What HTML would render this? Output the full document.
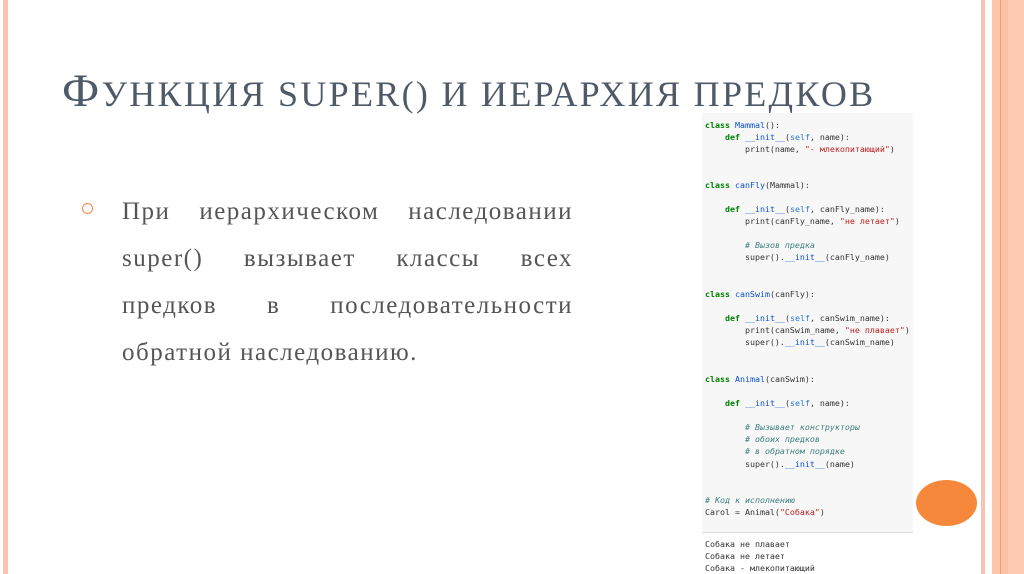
<!DOCTYPE html>
<html><head><meta charset="utf-8"><style>
body{margin:0;width:1024px;height:574px;background:#fff;position:relative;overflow:hidden;font-family:"Liberation Serif",serif}
.s{position:absolute;top:0;height:574px}
#title{position:absolute;left:62px;top:64px;color:#4f5a68;white-space:nowrap;font-size:36px;letter-spacing:2.3px}
#title .b{font-size:47px}
#body{position:absolute;left:122px;top:188px;width:451px;font-size:25px;line-height:47px;color:#555;letter-spacing:1.5px}
#body div{text-align:justify;text-align-last:justify;white-space:nowrap}
#body div.last{text-align-last:left}
#bul{position:absolute;left:82px;top:203px;width:9px;height:9px;border:1.6px solid #f08a4b;border-radius:50%}
#code{position:absolute;left:702px;top:113px;width:211px;height:419px;background:#f7f7f7;border-bottom:1px solid #ddd}
.l{position:absolute;font-family:"DejaVu Sans Mono","Liberation Mono",monospace;font-size:8.3px;white-space:pre;color:#333;left:705px}
.k{color:#008000;font-weight:bold}.c{color:#0a50c8}.st{color:#ba2121}.cm{color:#408080;font-style:italic}.sf{color:#2a7acb}
</style></head><body>
<div class="s" style="left:3px;width:5px;background:#f9c3b0"></div>
<div class="s" style="left:981px;width:4px;background:#f6c4b4"></div>
<div class="s" style="left:992px;width:8px;background:#fdc5ab"></div>
<div class="s" style="left:1000px;width:1px;background:#f0a070"></div>
<div class="s" style="left:1001px;width:7px;background:#fcc0a4"></div>
<div class="s" style="left:1008px;width:16px;background:#fdcab2"></div>
<div id="title"><span class="b">Ф</span>УНКЦИЯ SUPER() И ИЕРАРХИЯ ПРЕДКОВ</div>
<div id="bul"></div>
<div id="body"><div style="white-space:normal">При иерархическом наследовании</div><div style="white-space:normal">super() вызывает классы всех</div><div style="white-space:normal">предков в последовательности</div><div class="last">обратной наследованию.</div></div>
<div id="code"></div>
<div class="l" style="top:120px"><span class="k">class</span> <span class="c">Mammal</span>():</div>
<div class="l" style="top:132px">    <span class="k">def</span> <span class="c">__init__</span>(<span class="sf">self</span>, name):</div>
<div class="l" style="top:144px">        print(name, <span class="st">"- млекопитающий"</span>)</div>
<div class="l" style="top:180px"><span class="k">class</span> <span class="c">canFly</span>(Mammal):</div>
<div class="l" style="top:204px">    <span class="k">def</span> <span class="c">__init__</span>(<span class="sf">self</span>, canFly_name):</div>
<div class="l" style="top:216px">        print(canFly_name, <span class="st">"не летает"</span>)</div>
<div class="l" style="top:240px">        <span class="cm"># Вызов предка</span></div>
<div class="l" style="top:252px">        super().<span class="c">__init__</span>(canFly_name)</div>
<div class="l" style="top:289px"><span class="k">class</span> <span class="c">canSwim</span>(canFly):</div>
<div class="l" style="top:313px">    <span class="k">def</span> <span class="c">__init__</span>(<span class="sf">self</span>, canSwim_name):</div>
<div class="l" style="top:325px">        print(canSwim_name, <span class="st">"не плавает"</span>)</div>
<div class="l" style="top:337px">        super().<span class="c">__init__</span>(canSwim_name)</div>
<div class="l" style="top:374px"><span class="k">class</span> <span class="c">Animal</span>(canSwim):</div>
<div class="l" style="top:398px">    <span class="k">def</span> <span class="c">__init__</span>(<span class="sf">self</span>, name):</div>
<div class="l" style="top:422px">        <span class="cm"># Вызывает конструкторы</span></div>
<div class="l" style="top:434px">        <span class="cm"># обоих предков</span></div>
<div class="l" style="top:446px">        <span class="cm"># в обратном порядке</span></div>
<div class="l" style="top:459px">        super().<span class="c">__init__</span>(name)</div>
<div class="l" style="top:495px"><span class="cm"># Код к исполнению</span></div>
<div class="l" style="top:507px">Carol = Animal(<span class="st">"Собака"</span>)</div>
<div class="l" style="top:539px">Собака не плавает</div>
<div class="l" style="top:551px">Собака не летает</div>
<div class="l" style="top:563px">Собака - млекопитающий</div>
<div style="position:absolute;left:916px;top:480px;width:61px;height:46px;border-radius:50%;background:#f5883a"></div>
</body></html>
